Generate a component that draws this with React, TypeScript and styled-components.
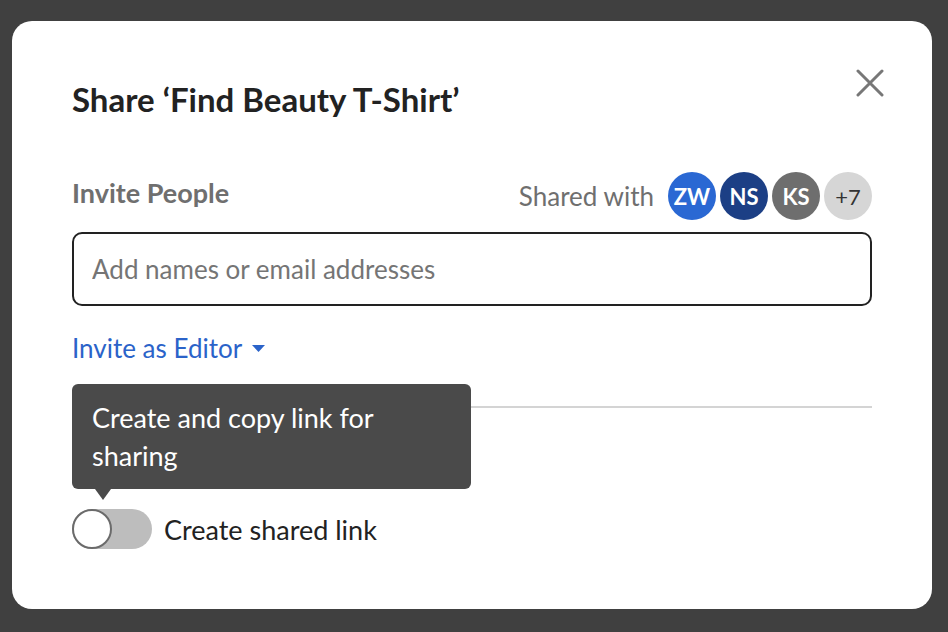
import React from "react";
import styled, { createGlobalStyle } from "styled-components";

const Global = createGlobalStyle`
  html, body { margin: 0; padding: 0; }
  body {
    background: #404040;
    font-family: Lato, "Open Sans", "Liberation Sans", sans-serif;
  }
  * { box-sizing: border-box; }
`;

const Page = styled.div`
  width: 948px;
  height: 632px;
  padding: 21px 16px 23px 12px;
  background: #404040;
`;

const Modal = styled.div`
  width: 920px;
  height: 588px;
  background: #ffffff;
  border-radius: 20px;
  padding: 58px 60px 0 60px;
  display: flex;
  flex-direction: column;
`;

const Header = styled.div`
  display: flex;
  justify-content: space-between;
  align-items: flex-start;
`;

const Title = styled.h2`
  margin: 0;
  font-size: 33px;
  line-height: 40px;
  font-weight: 700;
  color: #222222;
`;

const CloseButton = styled.button`
  width: 32px;
  height: 32px;
  margin: -12px -14px 0 0;
  padding: 0;
  border: none;
  background: transparent;
  display: flex;
  align-items: center;
  justify-content: center;
  cursor: pointer;
`;

const InviteRow = styled.div`
  display: flex;
  justify-content: space-between;
  align-items: center;
  margin-top: 53px;
  height: 48px;
`;

const SectionLabel = styled.div`
  font-size: 27px;
  font-weight: 700;
  color: #6f6f6f;
  margin-top: -8px;
`;

const SharedWith = styled.div`
  display: flex;
  align-items: center;
  gap: 4px;
`;

const SharedText = styled.span`
  font-size: 26px;
  color: #6f6f6f;
  margin-right: 10px;
`;

const Avatar = styled.div<{ $bg: string; $fg: string; $weight: number }>`
  width: 48px;
  height: 48px;
  border-radius: 50%;
  background: ${(p) => p.$bg};
  color: ${(p) => p.$fg};
  font-weight: ${(p) => p.$weight};
  font-size: 22px;
  display: flex;
  align-items: center;
  justify-content: center;
`;

const Input = styled.input`
  margin-top: 12px;
  width: 800px;
  height: 74px;
  border: 2px solid #222222;
  border-radius: 10px;
  padding: 0 18px;
  font-family: inherit;
  font-size: 26px;
  color: #222;
  outline: none;
  &::placeholder { color: #757575; }
`;

const RoleLink = styled.button`
  align-self: flex-start;
  margin-top: 26px;
  padding: 0;
  border: none;
  background: transparent;
  font-family: inherit;
  font-size: 26px;
  line-height: 32px;
  color: #2b63c9;
  display: flex;
  align-items: center;
  gap: 10px;
  cursor: pointer;
`;

const Divider = styled.hr`
  margin: 42px 0 0 0;
  border: none;
  height: 2px;
  background: #d4d4d4;
`;

const ToggleRow = styled.div`
  position: relative;
  display: flex;
  align-items: center;
  gap: 12px;
  margin-top: 101px;
  height: 40px;
`;

const Track = styled.div`
  width: 80px;
  height: 40px;
  border-radius: 20px;
  background: #bdbdbd;
  display: flex;
  align-items: center;
`;

const Knob = styled.div`
  width: 40px;
  height: 40px;
  border-radius: 50%;
  background: #ffffff;
  border: 2px solid #6b6b6b;
`;

const ToggleLabel = styled.span`
  font-size: 27px;
  color: #222222;
`;

const Tooltip = styled.div`
  position: absolute;
  left: 0;
  bottom: 60px;
  width: 399px;
  height: 105px;
  background: #4a4a4a;
  border-radius: 6px;
  padding: 15px 20px;
  color: #ffffff;
  font-size: 27px;
  line-height: 38px;
  &::after {
    content: "";
    position: absolute;
    left: 23px;
    bottom: -11px;
    border-left: 8px solid transparent;
    border-right: 8px solid transparent;
    border-top: 11px solid #4a4a4a;
  }
`;

const avatars = [
  { t: "ZW", bg: "#2a68d3", fg: "#fff", w: 700 },
  { t: "NS", bg: "#1c3f85", fg: "#fff", w: 700 },
  { t: "KS", bg: "#6e6e6e", fg: "#fff", w: 700 },
  { t: "+7", bg: "#d6d6d6", fg: "#333", w: 400 },
];

export default function App() {
  return (
    <>
      <Global />
      <Page>
        <Modal>
          <Header>
            <Title>Share ‘Find Beauty T-Shirt’</Title>
            <CloseButton aria-label="Close">
              <svg width="28" height="28" viewBox="0 0 28 28">
                <path d="M2 2 L26 26 M26 2 L2 26" stroke="#777" strokeWidth="3" strokeLinecap="round" />
              </svg>
            </CloseButton>
          </Header>
          <InviteRow>
            <SectionLabel>Invite People</SectionLabel>
            <SharedWith>
              <SharedText>Shared with</SharedText>
              {avatars.map((a) => (
                <Avatar key={a.t} $bg={a.bg} $fg={a.fg} $weight={a.w}>
                  {a.t}
                </Avatar>
              ))}
            </SharedWith>
          </InviteRow>
          <Input placeholder="Add names or email addresses" />
          <RoleLink>
            Invite as Editor
            <svg width="13" height="7" viewBox="0 0 13 7">
              <path d="M0 0 H13 L6.5 7 Z" fill="#2b63c9" />
            </svg>
          </RoleLink>
          <Divider />
          <ToggleRow>
            <Tooltip>Create and copy link for sharing</Tooltip>
            <Track>
              <Knob />
            </Track>
            <ToggleLabel>Create shared link</ToggleLabel>
          </ToggleRow>
        </Modal>
      </Page>
    </>
  );
}
